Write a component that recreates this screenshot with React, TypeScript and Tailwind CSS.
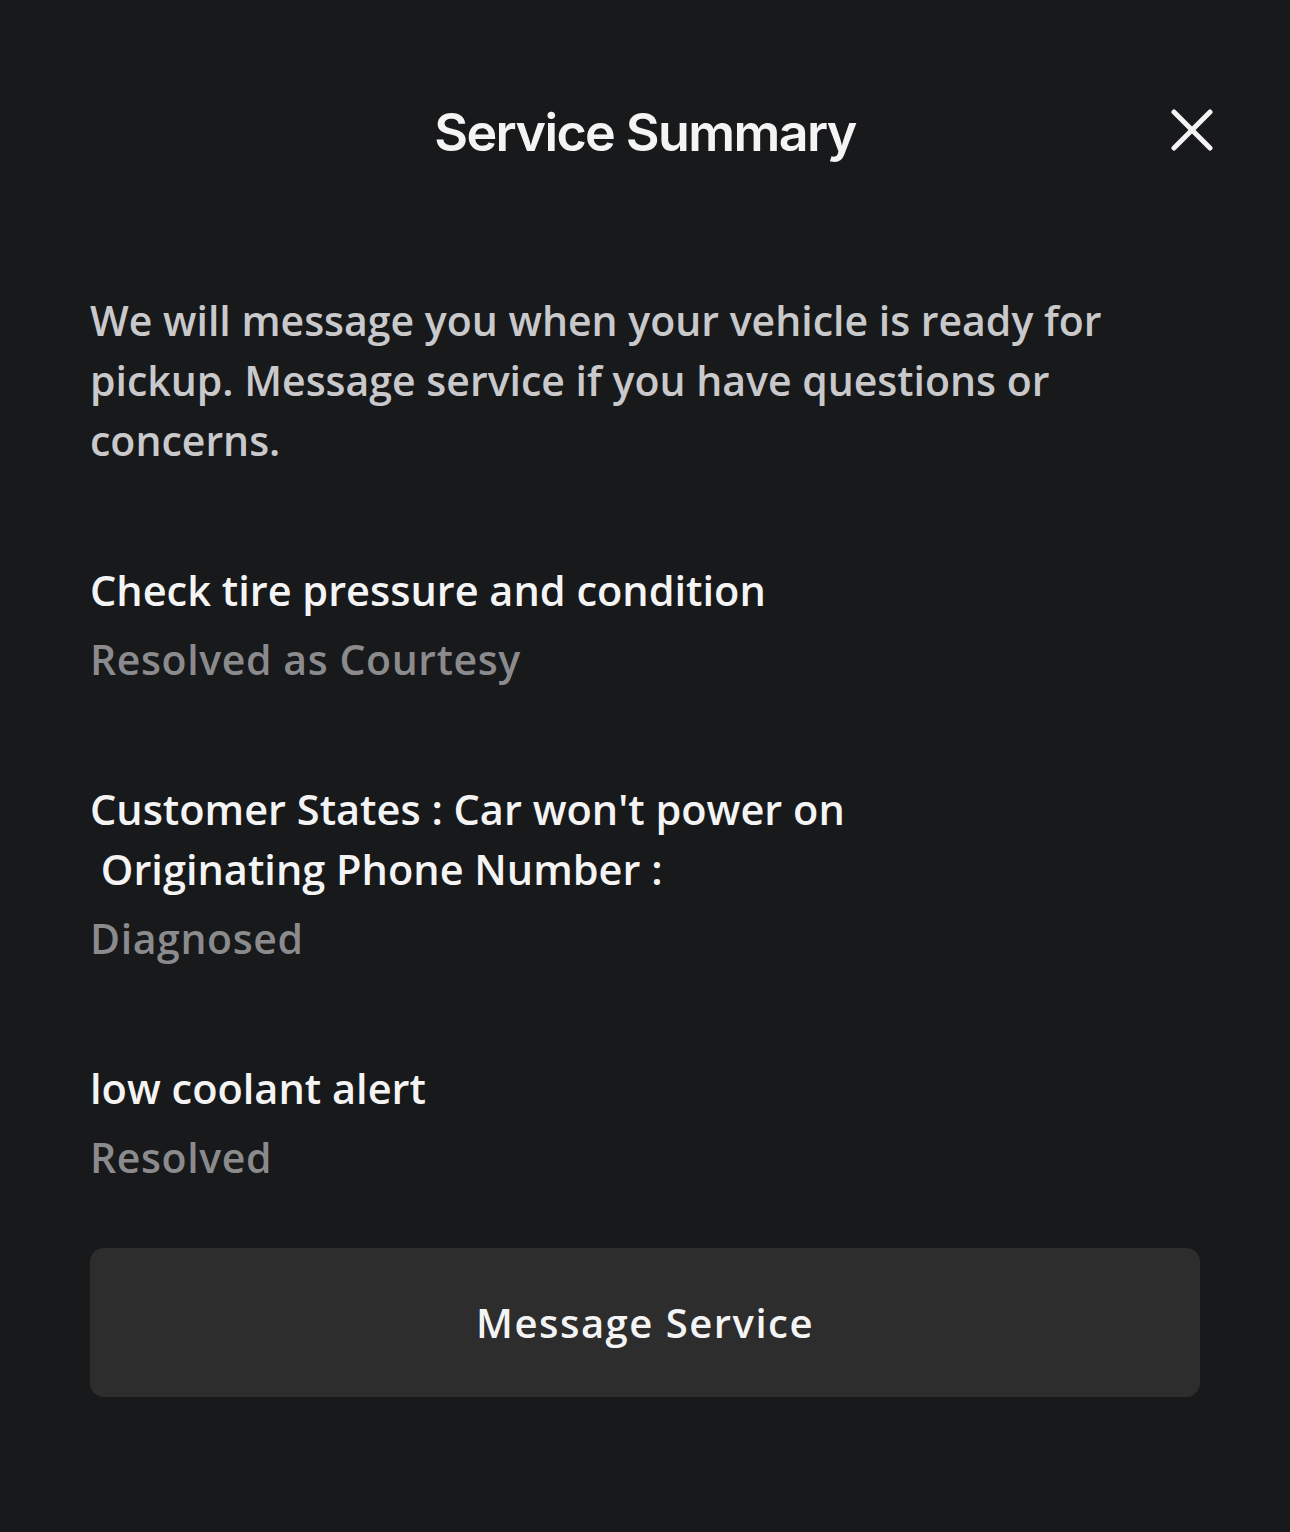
const items = [
  { title: 'Check tire pressure and condition', status: 'Resolved as Courtesy' },
  { title: "Customer States : Car won't power on\n Originating Phone Number :", status: 'Diagnosed' },
  { title: 'low coolant alert', status: 'Resolved' },
];

function CloseIcon() {
  return (
    <svg width="42" height="42" viewBox="0 0 42 42" fill="none" stroke="currentColor" strokeWidth="5" strokeLinecap="round">
      <path d="M3 3 39 39" />
      <path d="M39 3 3 39" />
    </svg>
  );
}

export default function App() {
  return (
    <div
      className="min-h-[1532px] w-full bg-[#18191b] flex flex-col"
      style={{ fontFamily: '"Open Sans", "Liberation Sans", sans-serif' }}
    >
      {/* header */}
      <div className="grid grid-cols-[1fr_auto_1fr] items-center pt-[101px] px-[77px]">
        <div />
        <h1
          className="text-[52px] leading-[64px] font-semibold text-[#f4f4f5] tracking-[-1.6px]"
          style={{ fontFamily: 'Inter, "Liberation Sans", sans-serif' }}
        >
          Service Summary
        </h1>
        <div className="flex justify-end mb-[7px]">
          <button className="text-[#f4f4f5]">
            <CloseIcon />
          </button>
        </div>
      </div>

      <div className="px-[90px] flex flex-col">
        <p className="mt-[125px] text-[41px] leading-[60px] font-semibold text-[#c9c9cb]">
          We will message you when your vehicle is ready for pickup. Message service if you have questions or concerns.
        </p>

        {items.map((item) => (
          <div key={item.status} className="mt-[90px] flex flex-col">
            <div className="text-[41.5px] leading-[60px] font-semibold text-[#f4f4f5] whitespace-pre-wrap">
              {item.title}
            </div>
            <div className="mt-[9px] text-[41px] leading-[60px] font-semibold tracking-[0.6px] text-[#8b8b8d]">
              {item.status}
            </div>
          </div>
        ))}

        <button className="mt-[61px] h-[149px] w-full rounded-[14px] bg-[#2d2d2e] text-[40px] font-semibold tracking-[1.5px] text-[#f4f4f5]">
          Message Service
        </button>
      </div>
    </div>
  );
}
